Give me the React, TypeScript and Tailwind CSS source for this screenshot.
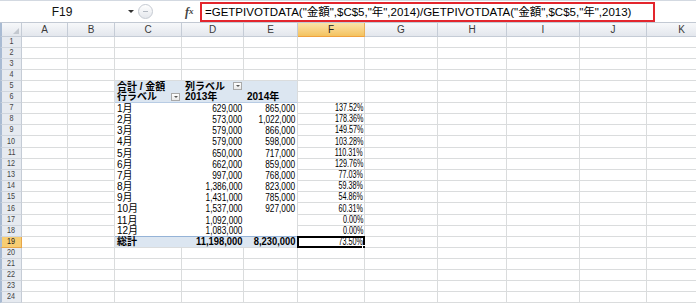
import React from "react";

type MonthRow = { label: string; y13: string; y14: string; pct: string };

const letters = ["A", "B", "C", "D", "E", "F", "G", "H", "I", "J", "K"];

const months: MonthRow[] = [
  { label: "1月", y13: "629,000", y14: "865,000", pct: "137.52%" },
  { label: "2月", y13: "573,000", y14: "1,022,000", pct: "178.36%" },
  { label: "3月", y13: "579,000", y14: "866,000", pct: "149.57%" },
  { label: "4月", y13: "579,000", y14: "598,000", pct: "103.28%" },
  { label: "5月", y13: "650,000", y14: "717,000", pct: "110.31%" },
  { label: "6月", y13: "662,000", y14: "859,000", pct: "129.76%" },
  { label: "7月", y13: "997,000", y14: "768,000", pct: "77.03%" },
  { label: "8月", y13: "1,386,000", y14: "823,000", pct: "59.38%" },
  { label: "9月", y13: "1,431,000", y14: "785,000", pct: "54.86%" },
  { label: "10月", y13: "1,537,000", y14: "927,000", pct: "60.31%" },
  { label: "11月", y13: "1,092,000", y14: "", pct: "0.00%" },
  { label: "12月", y13: "1,083,000", y14: "", pct: "0.00%" },
];

const rows = Array.from({ length: 24 }, (_, i) => i + 1);

const Num = ({ v, kind }: { v: string; kind: "num" | "pct" | "bold" }) => (
  <span
    className={`inline-block origin-right whitespace-nowrap ${
      kind === "num" ? "scale-x-[0.83]" : kind === "pct" ? "scale-x-[0.72]" : "scale-x-[0.94] font-bold"
    }`}
  >
    {v}
  </span>
);

const Dropdown = ({ className }: { className: string }) => (
  <span
    className={`absolute flex h-[8px] w-[9px] items-center justify-center border border-[#a9a9a9] bg-linear-to-b from-white to-[#e9e9e9] ${className}`}
  >
    <span className="h-0 w-0 border-x-[2px] border-t-[2px] border-x-transparent border-t-[#555]" />
  </span>
);

function rowHeight(r: number) {
  return r === 10 || r === 16 ? "h-[12px]" : "h-[11px]";
}

function Cell({ r, c }: { r: number; c: number }) {
  const inPivot = r >= 5 && r <= 19 && c >= 2 && c <= 4;
  let cls = `relative flex items-center whitespace-nowrap text-[10px] leading-none ${rowHeight(r)}`;

  if (!inPivot) {
    cls += " border-r border-b border-[#dadcdd] bg-white";
  } else {
    cls += r === 5 || r === 6 || r === 19 ? " bg-[#dce6f1]" : " bg-white";
    if (c === 4) cls += " border-r border-r-[#dadcdd]";
    if (r === 6) cls += " border-b border-b-[#b8cce4]";
    if (r === 18) cls += " border-b border-b-[#95b3d7]";
    if (r === 19) cls += " border-b border-b-[#dadcdd]";
  }

  let content: React.ReactNode = null;
  const m = r >= 7 && r <= 18 ? months[r - 7] : null;

  if (r === 5 && c === 2) content = <span className="pl-[2px] font-bold">合計 / 金額</span>;
  if (r === 5 && c === 3)
    content = (
      <>
        <span className="pl-[3px] font-bold">列ラベル</span>
        <Dropdown className="right-[2px] top-[1px]" />
      </>
    );
  if (r === 6 && c === 2)
    content = (
      <>
        <span className="pl-[2px] font-bold">行ラベル</span>
        <Dropdown className="right-[2px] top-[1px]" />
      </>
    );
  if (r === 6 && c === 3) content = <span className="pl-[3px] font-bold">2013年</span>;
  if (r === 6 && c === 4) content = <span className="pl-[3px] font-bold">2014年</span>;

  if (m) {
    if (c === 2) content = <span className="pl-[2px]">{m.label}</span>;
    if (c === 3) content = <Num v={m.y13} kind="num" />;
    if (c === 4) content = <Num v={m.y14} kind="num" />;
    if (c === 5) content = <Num v={m.pct} kind="pct" />;
  }

  if (r === 19) {
    if (c === 2) content = <span className="pl-[2px] font-bold">総計</span>;
    if (c === 3) content = <Num v="11,198,000" kind="bold" />;
    if (c === 4) content = <Num v="8,230,000" kind="bold" />;
    if (c === 5)
      content = (
        <>
          <Num v="73.50%" kind="pct" />
          {/* selected cell */}
          <span className="absolute -top-[1px] -left-[1px] -right-[1px] -bottom-[1px] border-2 border-black" />
          <span className="absolute -right-[3px] -bottom-[3px] h-[5px] w-[5px] border border-white bg-black" />
        </>
      );
  }

  const right = (m && c >= 3 && c <= 5) || (r === 19 && c >= 3 && c <= 5);
  if (right) cls += c === 5 ? " justify-end pr-[1px]" : " justify-end pr-[2px]";

  return <div className={cls}>{content}</div>;
}

const FormulaBar = () => (
  <div className="flex h-[23px] border-t border-b border-t-[#d3d9e1] border-b-[#c2c9d3] bg-white">
    <div className="relative flex w-[137px] items-center justify-center pr-[13px] text-[12px] text-[#111]">
      F19
      <span className="absolute right-[3px] top-[9px] h-0 w-0 border-x-[3px] border-t-[3px] border-x-transparent border-t-[#333]" />
    </div>
    <div className="flex w-[48px] items-center">
      <span className="ml-[1px] flex h-[15px] w-[15px] items-center justify-center rounded-full border border-[#c5cad2] bg-linear-to-b from-white to-[#e4e7ec]">
        <span className="h-[1px] w-[5px] bg-[#b3b9c2]" />
      </span>
    </div>
    <div className="flex w-[15px] items-center font-['Liberation_Serif',serif] text-[12px] font-bold italic text-[#444]">
      f<span className="text-[9px]">x</span>
    </div>
    <div className="mt-[1px] h-[20px] w-[455px] border-2 border-[#e3262d] px-[3px] text-[11.5px] leading-[16px] text-black">
      =GETPIVOTDATA("金額",$C$5,"年",2014)/GETPIVOTDATA("金額",$C$5,"年",2013)
    </div>
  </div>
);

export default function App() {
  return (
    <div className="h-[304px] w-[696px] overflow-hidden bg-white font-['Liberation_Sans','Noto_Sans_CJK_JP',sans-serif] text-black">
      <FormulaBar />
      <div className="grid w-[717px] grid-cols-[22px_46px_47px_67px_62px_54px_67px_73px_69px_73px_67px_70px]">
        {/* column headers */}
        <div className="relative h-[14px] border-r border-b border-l-2 border-[#c5ccd6] border-l-[#a9bbd3] bg-linear-to-b from-[#f7f8fa] to-[#e3e7ed]">
          <svg className="absolute right-[2px] bottom-[2px]" width="6" height="6" viewBox="0 0 6 6">
            <path d="M6 0 L6 6 L0 6 Z" fill="#c3c8cf" />
          </svg>
        </div>
        {letters.map((l) => (
          <div
            key={l}
            className={`flex h-[14px] items-center justify-center border-r border-b text-[10px] ${
              l === "F"
                ? "border-r-[#e8b15a] border-b-[#f0a13e] bg-linear-to-b from-[#fbe3a8] to-[#f4c35e] text-[#222]"
                : "border-[#c5ccd6] bg-linear-to-b from-[#f7f8fa] to-[#e3e7ed] text-[#3a3a3a]"
            }`}
          >
            {l}
          </div>
        ))}

        {rows.map((r) => (
          <React.Fragment key={r}>
            <div
              className={`flex items-center justify-center border-r border-b border-l-2 border-l-[#a9bbd3] text-[9px] ${rowHeight(r)} ${
                r === 19
                  ? "border-r-[#e6a64a] border-b-[#e6a64a] bg-[#f7cd72] text-[#222]"
                  : "border-r-[#c5ccd6] border-b-[#cfd5dd] bg-[#e6eaf0] text-[#444]"
              }`}
            >
              <span className="inline-block scale-x-[0.8]">{r}</span>
            </div>
            {letters.map((_, c) => (
              <Cell key={c} r={r} c={c} />
            ))}
          </React.Fragment>
        ))}
      </div>
    </div>
  );
}
